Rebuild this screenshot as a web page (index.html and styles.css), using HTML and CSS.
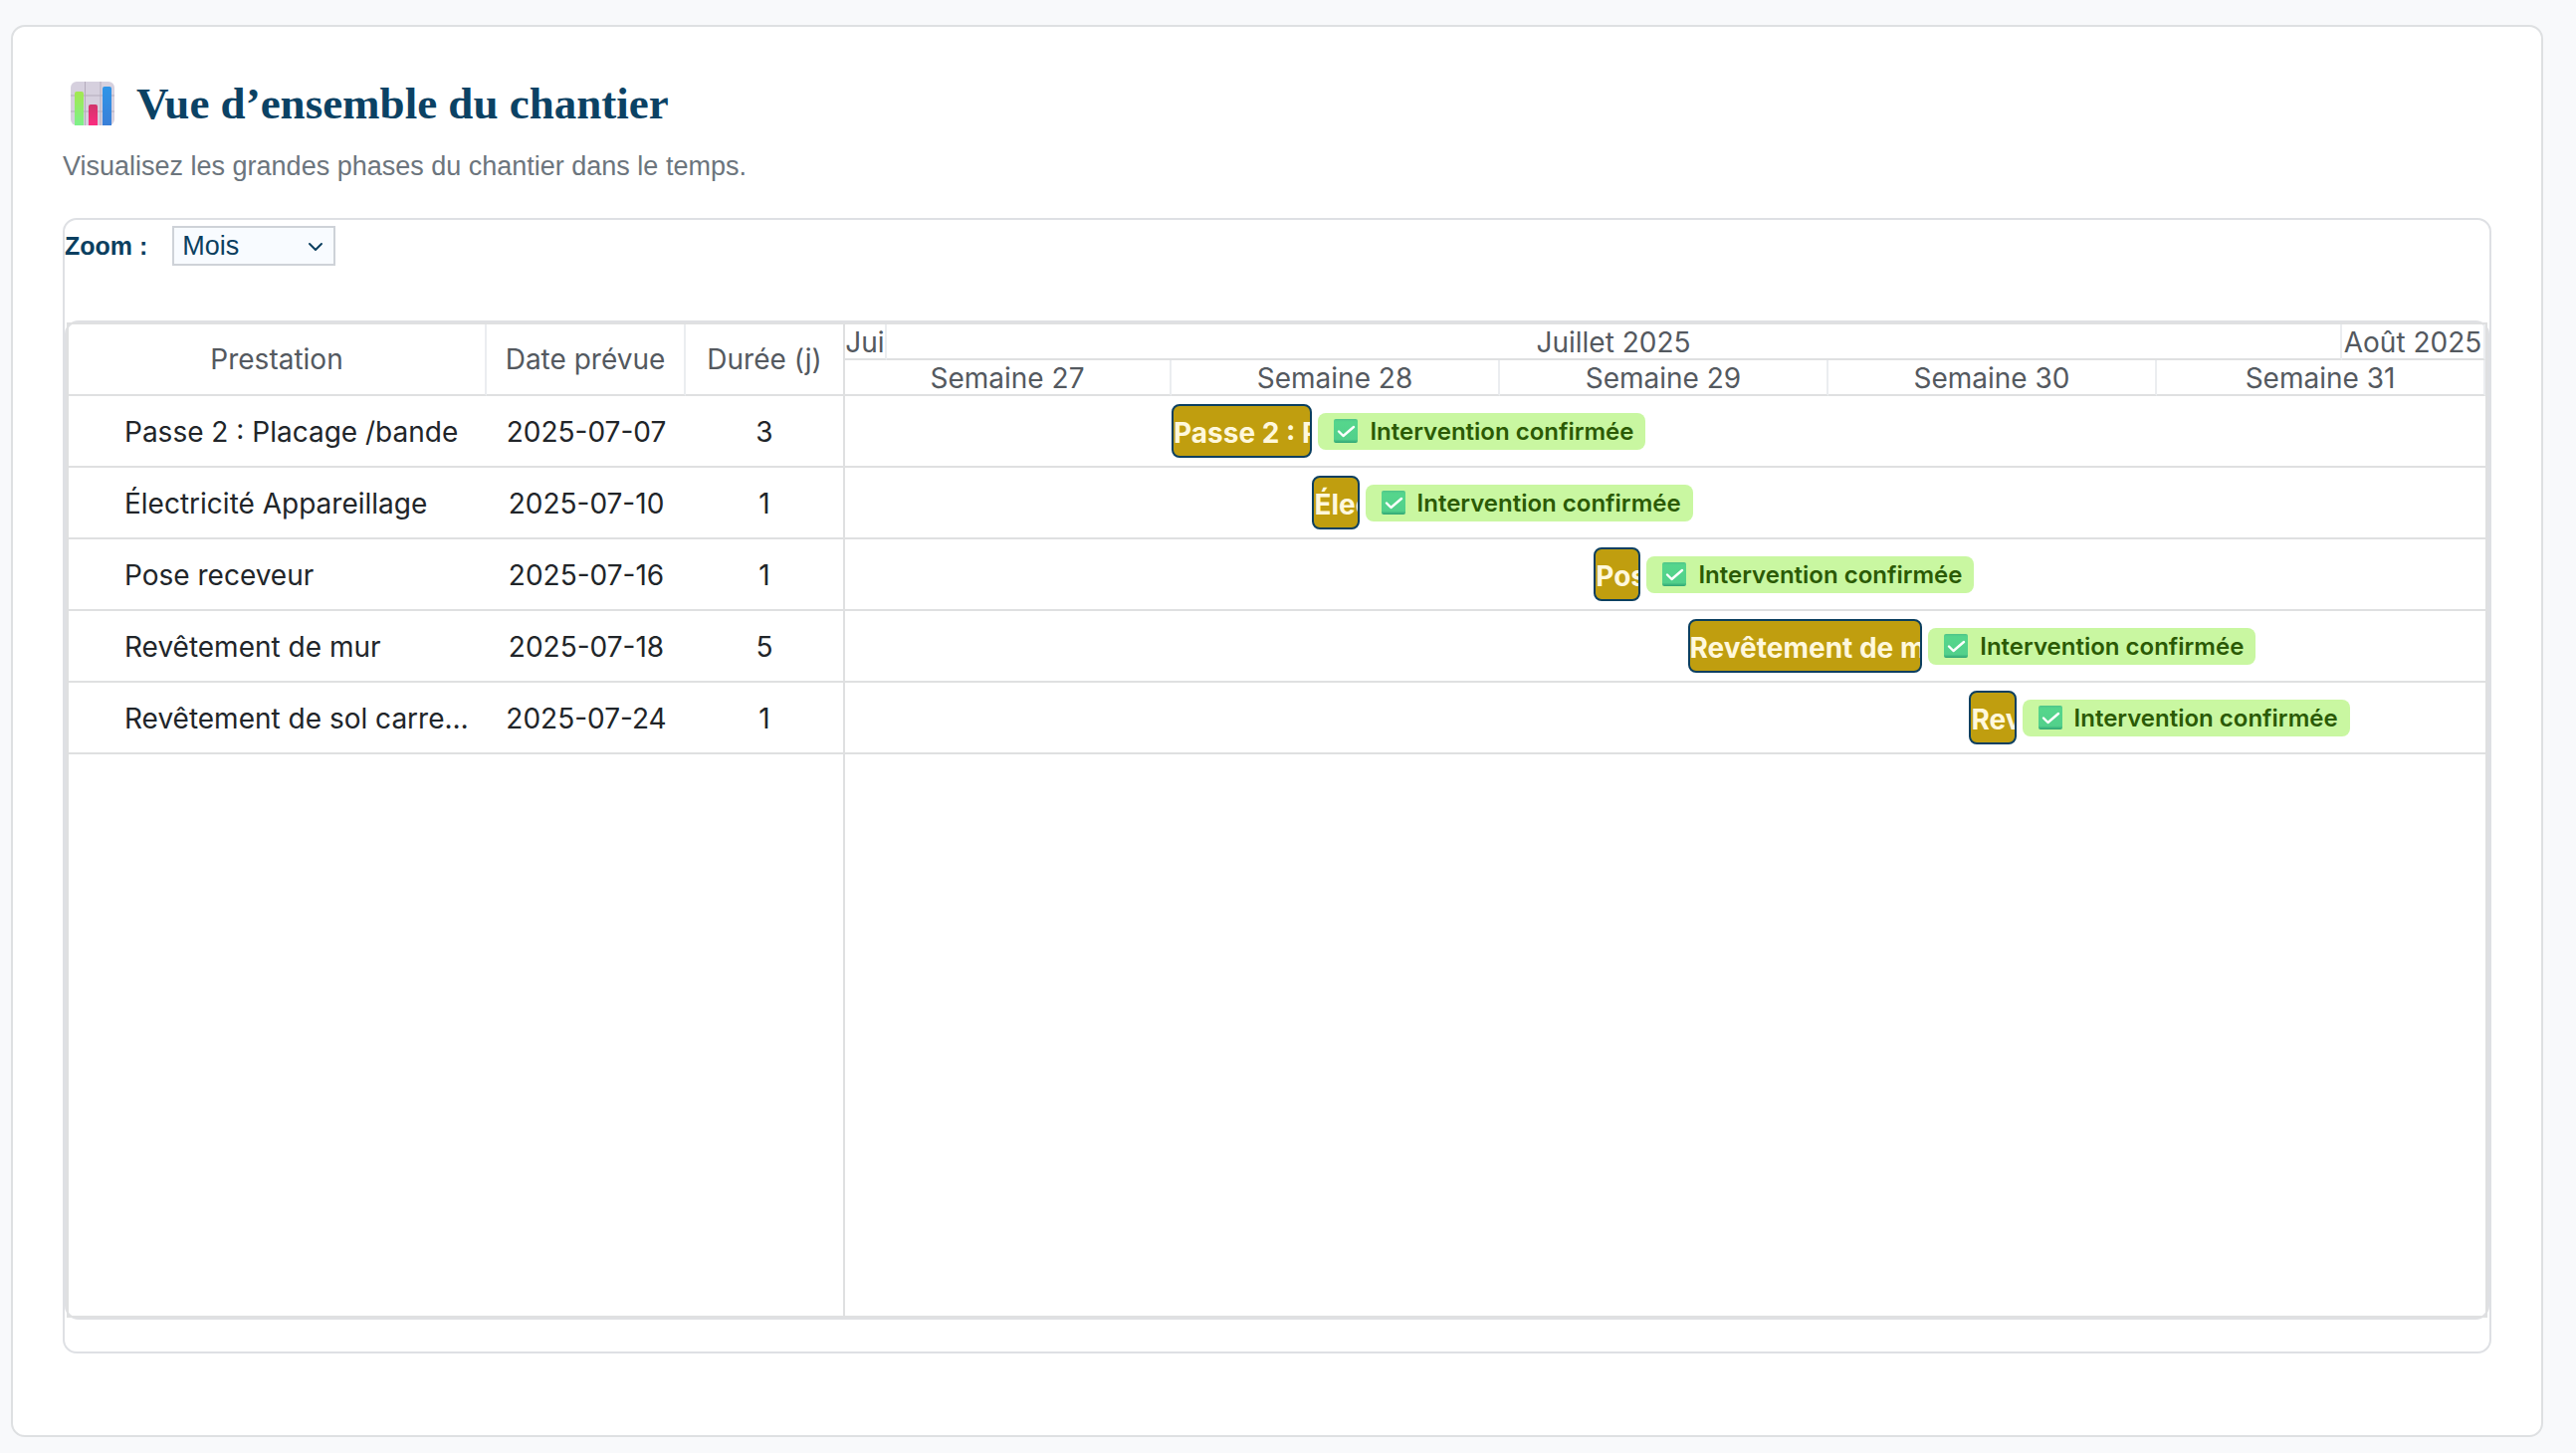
FILE: index.html
```html
<!DOCTYPE html>
<html lang="fr">
<head>
    <meta charset="UTF-8">
    <meta name="viewport" content="width=device-width, initial-scale=1.0">
    <title>Vue d’ensemble du chantier</title>
    <link rel="stylesheet" href="styles.css">
</head>
<body>
    <svg class="symbols" aria-hidden="true">
        <defs>
            <linearGradient id="check-bg" x1="0" y1="0" x2="0" y2="1">
                <stop offset="0" stop-color="#4fc48a"/>
                <stop offset="0.12" stop-color="#55d68c"/>
                <stop offset="0.85" stop-color="#52d08b"/>
                <stop offset="1" stop-color="#2fa374"/>
            </linearGradient>
        </defs>
        <symbol id="check" viewBox="0 0 24 24">
            <rect width="24" height="24" rx="2" fill="url(#check-bg)"/>
            <path d="M5 12.500l4.500 4.500L20 8" fill="none" stroke="#fff" stroke-width="2.400" stroke-linecap="round" stroke-linejoin="round"/>
        </symbol>
    </svg>

    <main class="card">
        <h1>
            <svg class="title-icon" viewBox="0 0 44 44" aria-hidden="true">
                <defs>
                    <linearGradient id="green" x1="0" y1="0" x2="0" y2="1">
                        <stop offset="0" stop-color="#a3e850"/>
                        <stop offset="1" stop-color="#7df08a"/>
                    </linearGradient>
                    <linearGradient id="pink" x1="0" y1="0" x2="0" y2="1">
                        <stop offset="0" stop-color="#d0356b"/>
                        <stop offset="1" stop-color="#fb2d80"/>
                    </linearGradient>
                    <linearGradient id="blue" x1="0" y1="0" x2="0" y2="1">
                        <stop offset="0" stop-color="#2f95e8"/>
                        <stop offset="1" stop-color="#3a7fd8"/>
                    </linearGradient>
                </defs>
                <rect width="44" height="44" rx="6" fill="#d6d0de"/>
                <path d="M14.500 0v44M30 0v44M0 14h44M0 30h44" stroke="#b5acbd" stroke-width="1"/>
                <path d="M4 44V12q0-2 2-2h5q2 0 2 2v32z" fill="url(#green)"/>
                <path d="M18 44V25q0-2 2-2h5q2 0 2 2v19z" fill="url(#pink)"/>
                <path d="M32 44V7q0-2 2-2h5q2 0 2 2v37z" fill="url(#blue)"/>
            </svg>
            Vue d’ensemble du chantier
        </h1>
        <p class="description">Visualisez les grandes phases du chantier dans le temps.</p>

        <section class="planning">
            <div class="zoom-bar">
                <label for="zoom">Zoom :</label>
                <span class="select-box">
                    <select id="zoom">
                        <option value="jour">Jour</option>
                        <option value="semaine">Semaine</option>
                        <option value="mois" selected>Mois</option>
                    </select>
                    <svg viewBox="0 0 16 10" aria-hidden="true"><path d="M2 2l6 6 6-6"/></svg>
                </span>
            </div>

            <div class="gantt">
                <div class="gantt-layout">
                    <table class="grid">
                        <thead>
                            <tr>
                                <th class="col-name">Prestation</th>
                                <th class="col-date">Date prévue</th>
                                <th class="col-days">Durée (j)</th>
                            </tr>
                        </thead>
                        <tbody>
                            <tr><td>Passe 2 : Placage /bande</td><td>2025-07-07</td><td>3</td></tr>
                            <tr><td>Électricité Appareillage</td><td>2025-07-10</td><td>1</td></tr>
                            <tr><td>Pose receveur</td><td>2025-07-16</td><td>1</td></tr>
                            <tr><td>Revêtement de mur</td><td>2025-07-18</td><td>5</td></tr>
                            <tr><td>Revêtement de sol carrelage</td><td>2025-07-24</td><td>1</td></tr>
                        </tbody>
                    </table>

                    <div class="timeline">
                        <div class="scale months">
                            <div>Jui</div>
                            <div>Juillet 2025</div>
                            <div>Août 2025</div>
                        </div>
                        <div class="scale weeks">
                            <div>Semaine 27</div>
                            <div>Semaine 28</div>
                            <div>Semaine 29</div>
                            <div>Semaine 30</div>
                            <div>Semaine 31</div>
                        </div>
                        <!-- --start : jours depuis le 30 juin, --days : durée affichée -->
                        <div class="row" style="--start: 7; --days: 3">
                            <div class="bar">Passe 2 : Placage /bande</div>
                            <span class="badge"><svg><use href="#check"/></svg>Intervention confirmée</span>
                        </div>
                        <div class="row" style="--start: 10; --days: 1">
                            <div class="bar">Électricité Appareillage</div>
                            <span class="badge"><svg><use href="#check"/></svg>Intervention confirmée</span>
                        </div>
                        <div class="row" style="--start: 16; --days: 1">
                            <div class="bar">Pose receveur</div>
                            <span class="badge"><svg><use href="#check"/></svg>Intervention confirmée</span>
                        </div>
                        <div class="row" style="--start: 18; --days: 5">
                            <div class="bar">Revêtement de mur</div>
                            <span class="badge"><svg><use href="#check"/></svg>Intervention confirmée</span>
                        </div>
                        <div class="row" style="--start: 24; --days: 1">
                            <div class="bar">Revêtement de sol carrelage</div>
                            <span class="badge"><svg><use href="#check"/></svg>Intervention confirmée</span>
                        </div>
                    </div>
                </div>
            </div>
        </section>
    </main>
</body>
</html>
```

FILE: styles.css
```css
* {
    box-sizing: border-box;
}
body {
    margin: 0;
    padding: 25px 33px 16px 11px;
    background-color: #f8f9fb;
    font-family: Inter, sans-serif;
    color: #212529;
}
.symbols {
    position: absolute;
    width: 0;
    height: 0;
}
.card {
    padding: 48px 50px 82px;
    background-color: #fff;
    border: 2px solid #dee0e2;
    border-radius: 14px;
}
h1 {
    display: flex;
    align-items: center;
    gap: 22px;
    margin: 0 0 14px;
    padding-left: 8px;
    font-family: "Liberation Serif", serif;
    font-size: 45px;
    line-height: 58px;
    color: #0b4264;
}
.title-icon {
    width: 44px;
    height: 44px;
}
.description {
    margin: 0 0 32px;
    font-family: "Liberation Sans", sans-serif;
    font-size: 27px;
    line-height: 40px;
    color: #6c757d;
}
.planning {
    padding-bottom: 32px;
    border: 2px solid #dee0e4;
    border-radius: 14px;
}
.zoom-bar {
    display: flex;
    align-items: center;
    gap: 25px;
    padding: 6px 0;
    margin-bottom: 49px;
    font-family: "Liberation Sans", sans-serif;
    color: #0b3f60;
}
.zoom-bar label {
    font-size: 25px;
    font-weight: 700;
}
.select-box {
    position: relative;
}
.select-box select {
    display: block;
    width: 164px;
    height: 40px;
    padding: 0 8px;
    appearance: none;
    background-color: #f8fbff;
    border: 2px solid #ced2d8;
    border-radius: 0;
    font-family: "Liberation Sans", sans-serif;
    font-size: 27px;
    color: #0b3f60;
}
.select-box svg {
    position: absolute;
    right: 12px;
    top: 16px;
    width: 16px;
    height: 10px;
    fill: none;
    stroke: #0b3f60;
    stroke-width: 2;
    stroke-linecap: round;
    stroke-linejoin: round;
    pointer-events: none;
}
.gantt {
    border: 2px solid #dfe0e3;
    border-radius: 14px;
}
.gantt-layout {
    display: flex;
    min-height: 1000px;
    border: 2px solid #dfe0e1;
}
.grid {
    flex: none;
    align-self: flex-start;
    width: 778px;
    table-layout: fixed;
    border-collapse: separate;
    border-spacing: 0;
    font-size: 28px;
}
.grid th,
.grid td {
    height: 72px;
    padding: 0;
    border-bottom: 2px solid #dfe0e1;
    font-weight: 400;
    text-align: center;
}
.grid th {
    border-right: 2px solid #ebedf0;
    color: #54595f;
}
.grid th:last-child {
    border-right: 0;
}
.grid td {
    padding: 2px 0 0;
}
.grid td:first-child {
    padding: 2px 12px 0 56px;
    overflow: hidden;
    text-align: left;
    text-overflow: ellipsis;
    white-space: nowrap;
}
.col-name {
    width: 420px;
}
.col-date {
    width: 200px;
}
.timeline {
    flex: 1;
    min-width: 0;
    box-shadow: inset 2px 0 #dfe0e1;
}
.scale {
    display: grid;
    grid-template-rows: 36px;
    font-size: 28px;
    line-height: 36px;
    color: #54595f;
}
.scale div {
    display: flex;
    justify-content: center;
    min-width: 0;
    border-right: 2px solid #ebedf0;
    border-bottom: 2px solid #dfe0e1;
    white-space: nowrap;
}
.scale div:first-child {
    padding-left: 2px;
}
.months {
    grid-template-columns: 44px 1fr 144px;
}
.weeks {
    grid-template-columns: repeat(5, 1fr);
}
.row {
    display: flex;
    align-items: center;
    gap: 6px;
    height: 72px;
    padding-left: calc(100% / 35 * var(--start));
    border-bottom: 2px solid #dfe0e1;
}
.bar {
    flex: none;
    width: calc(100% / (35 - var(--start)) * var(--days));
    height: 54px;
    overflow: hidden;
    background-color: #c09e0f;
    border: 2px solid #0b3f60;
    border-radius: 8px;
    font-size: 28px;
    font-weight: 700;
    line-height: 54px;
    color: #fff8dc;
    white-space: nowrap;
}
.badge {
    display: flex;
    align-items: center;
    gap: 12px;
    height: 37px;
    padding: 0 12px 0 16px;
    background-color: #c9f7a1;
    border-radius: 8px;
    font-size: 24px;
    font-weight: 600;
    color: #2b5a05;
    white-space: nowrap;
}
.badge svg {
    width: 24px;
    height: 24px;
}
```
